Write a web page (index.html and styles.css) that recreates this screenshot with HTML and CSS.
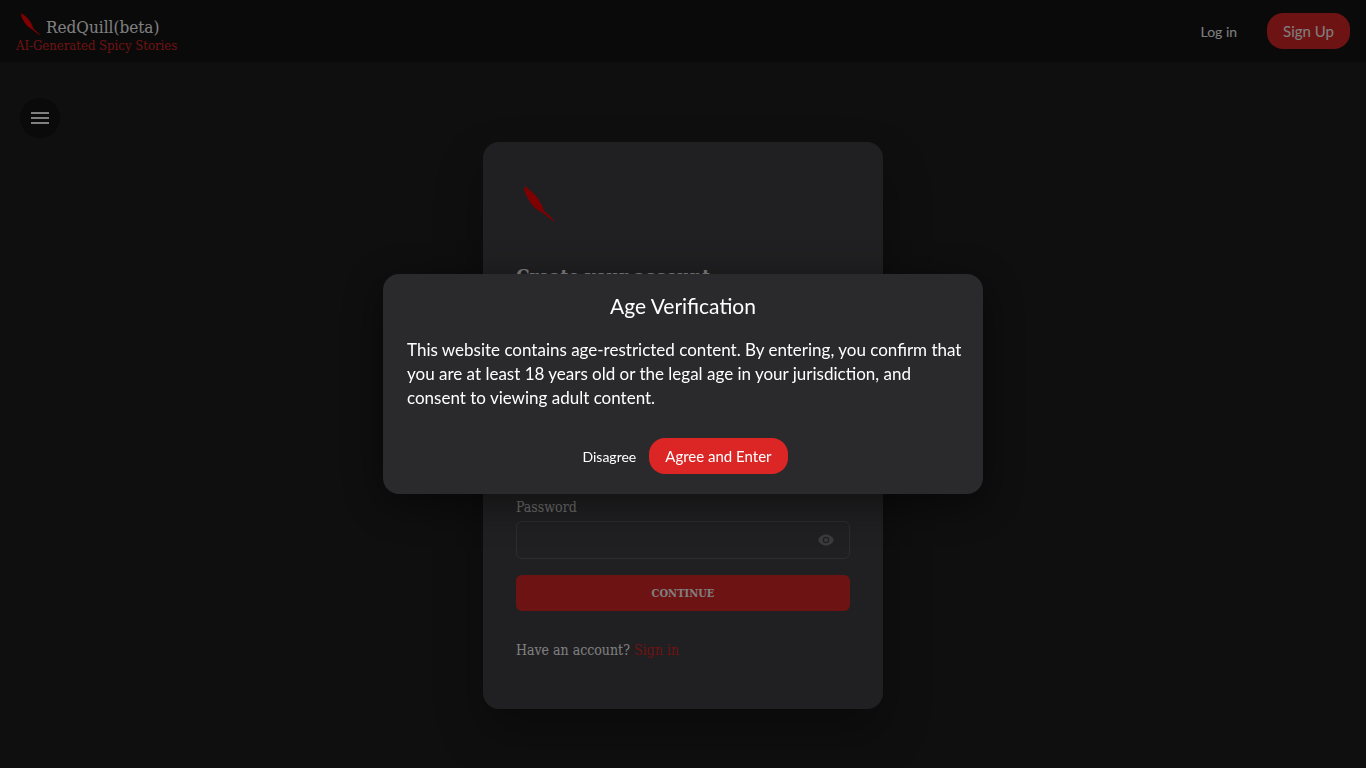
FILE: index.html
```
<!DOCTYPE html>
<html lang="en">
<head>
  <meta charset="UTF-8">
  <meta name="viewport" content="width=device-width, initial-scale=1.0">
  <title>RedQuill(beta)</title>
  <link rel="stylesheet" href="styles.css">
</head>
<body>
  <header class="header">
    <a href="#" class="brand">
      <span class="brand-row">
        <svg class="brand-logo" viewBox="0 0 48 48" aria-hidden="true">
          <path d="M9 8C12 11 17 14 20 18C24 23 26 27 28 33C32 36 35 39 39 44C34 41 31 38 27 35C21 32 16 28 13 22C10 17 7 12 9 8Z" fill="#ff0000"/>
        </svg>
        <span class="brand-name">RedQuill(beta)</span>
      </span>
      <span class="tagline">AI-Generated Spicy Stories</span>
    </a>
    <nav class="header-nav">
      <a href="#" class="login">Log in</a>
      <button type="button" class="btn">Sign Up</button>
    </nav>
  </header>

  <button type="button" class="menu-btn" aria-label="Menu">
    <svg viewBox="0 0 24 24" width="24" height="24" fill="currentColor" aria-hidden="true">
      <path d="M3 18h18v-2H3v2zm0-5h18v-2H3v2zm0-7v2h18V6H3z"/>
    </svg>
  </button>

  <main class="main">
    <form class="card">
      <svg class="card-logo" viewBox="0 0 48 48" aria-hidden="true">
        <path d="M9 8C12 11 17 14 20 18C24 23 26 27 28 33C32 36 35 39 39 44C34 41 31 38 27 35C21 32 16 28 13 22C10 17 7 12 9 8Z" fill="#ff0000"/>
      </svg>
      <h1 class="card-title">Create your account</h1>
      <div class="field">
        <label for="email">Email</label>
        <input type="email" id="email">
      </div>
      <div class="field">
        <label for="password">Password</label>
        <div class="input-wrap">
          <input type="password" id="password">
          <button type="button" class="eye" aria-label="Show password">
            <svg viewBox="0 0 16 16" width="16" height="16" aria-hidden="true">
              <path fill="currentColor" fill-rule="evenodd" d="M8 10a2 2 0 1 0 0-4 2 2 0 0 0 0 4Z M8 2.500C4.300 2.500 1.500 4.900.4 7.500a1.300 1.300 0 0 0 0 1C1.500 11.100 4.300 13.500 8 13.500s6.500-2.400 7.600-5a1.300 1.300 0 0 0 0-1C14.500 4.900 11.700 2.500 8 2.500ZM11.300 8a3.300 3.300 0 1 1-6.600 0 3.300 3.300 0 0 1 6.600 0Z"/>
            </svg>
          </button>
        </div>
      </div>
      <button type="submit" class="continue">CONTINUE</button>
      <p class="signin">Have an account? <a href="#">Sign in</a></p>
    </form>
  </main>

  <div class="overlay">
    <div class="modal" role="dialog" aria-modal="true" aria-labelledby="age-title">
      <h2 class="modal-title" id="age-title">Age Verification</h2>
      <p class="modal-text">This website contains age-restricted content. By entering, you confirm that you are at least 18 years old or the legal age in your jurisdiction, and consent to viewing adult content.</p>
      <div class="modal-actions">
        <button type="button" class="btn-text">Disagree</button>
        <button type="button" class="btn">Agree and Enter</button>
      </div>
    </div>
  </div>
</body>
</html>
```

FILE: styles.css
```
* {
  box-sizing: border-box;
}
body {
  margin: 0;
  min-height: 100vh;
  background: #1e1e1e;
  color: #fff;
  font-family: Lato, sans-serif;
}
h1, h2, p {
  margin: 0;
  font-weight: 400;
}
a {
  color: inherit;
  text-decoration: none;
}
button {
  font-family: inherit;
  color: inherit;
  border: none;
  background: none;
  padding: 0;
  cursor: pointer;
}

/* header */
.header {
  display: flex;
  justify-content: space-between;
  align-items: center;
  height: 62px;
  padding: 0 16px;
  background: #141414;
}
.brand {
  display: flex;
  flex-direction: column;
  font-family: "DejaVu Serif Condensed", "DejaVu Serif", serif;
}
.brand-row {
  display: flex;
  align-items: center;
}
.brand-logo {
  width: 30px;
  height: 30px;
}
.brand-name {
  padding-top: 8px;
  font-size: 17px;
  line-height: 22px;
}
.tagline {
  font-size: 13px;
  line-height: 16px;
  color: #dc2626;
}
.header-nav {
  display: flex;
  align-items: center;
  gap: 30px;
}
.login {
  font-size: 14px;
}
.btn {
  height: 36px;
  padding: 0 16px;
  border-radius: 16px;
  background: #dc2626;
  font-size: 15px;
}

.menu-btn {
  position: absolute;
  top: 98px;
  left: 20px;
  display: flex;
  align-items: center;
  justify-content: center;
  width: 40px;
  height: 40px;
  border-radius: 50%;
  background: #141414;
}

/* sign up card */
.main {
  display: flex;
  justify-content: center;
  padding: 80px 16px 48px;
}
.card {
  width: 100%;
  max-width: 400px;
  padding: 36px 33px 48px;
  border-radius: 16px;
  background: #404044;
  box-shadow: 0 24px 48px rgba(0, 0, 0, 0.3);
  font-family: "DejaVu Serif Condensed", "DejaVu Serif", serif;
}
.card-logo {
  display: block;
  width: 48px;
  height: 48px;
}
.card-title {
  margin: 36px 0 129px;
  font-size: 19px;
  font-weight: 700;
  line-height: 28px;
}
.field {
  display: flex;
  flex-direction: column;
  gap: 4px;
  margin-bottom: 16px;
}
.field label {
  font-size: 14px;
  line-height: 20px;
  color: #ddd;
}
.field input {
  width: 100%;
  height: 38px;
  padding: 0 12px;
  border: 1px solid #5a5a5e;
  border-radius: 6px;
  background: transparent;
  color: #fff;
}
.input-wrap {
  position: relative;
}
.eye {
  position: absolute;
  top: 11px;
  right: 16px;
  height: 16px;
  color: #77777b;
}
.eye svg {
  display: block;
}
.continue {
  width: 100%;
  height: 36px;
  border-radius: 6px;
  background: #dc2626;
  font-size: 11px;
  font-weight: 700;
}
.signin {
  margin-top: 28px;
  font-size: 14px;
  line-height: 22px;
}
.signin a {
  color: #dc2626;
}

/* age verification */
.overlay {
  position: fixed;
  inset: 0;
  display: flex;
  align-items: center;
  justify-content: center;
  padding: 16px;
  background: rgba(0, 0, 0, 0.5);
}
.modal {
  width: 100%;
  max-width: 600px;
  padding: 16px 24px 20px;
  border-radius: 16px;
  background: #2a2a2c;
  box-shadow: 0 10px 40px rgba(0, 0, 0, 0.5);
}
.modal-title {
  margin-bottom: 16px;
  font-size: 21px;
  line-height: 32px;
  text-align: center;
}
.modal-text {
  margin: 0 -8px 28px 0;
  font-size: 17px;
  line-height: 24px;
}
.modal-actions {
  display: flex;
  justify-content: center;
  gap: 13px;
  padding-left: 4px;
}
.btn-text {
  font-size: 14px;
}
```
